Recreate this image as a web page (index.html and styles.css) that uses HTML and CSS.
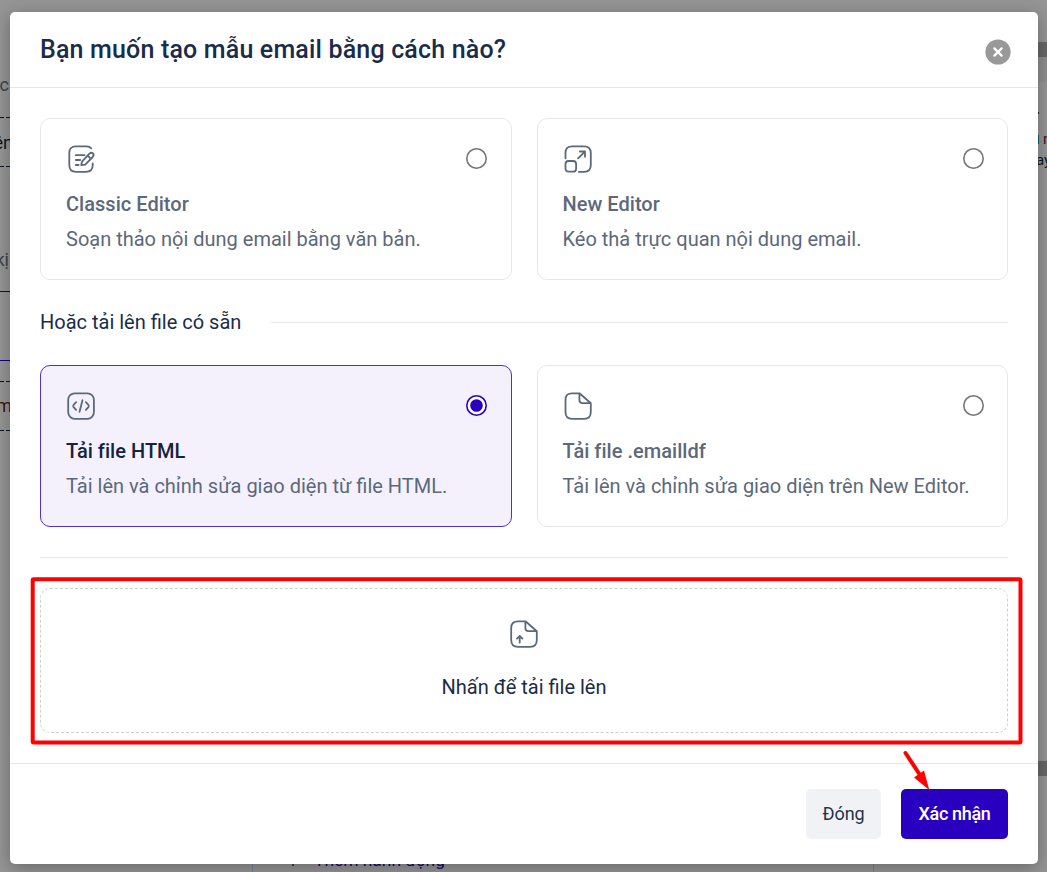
FILE: index.html
```html
<!DOCTYPE html>
<html lang="vi">
<head>
<meta charset="utf-8">
<title>Tạo mẫu email</title>
<link rel="stylesheet" href="styles.css">
</head>
<body>
<div class="screen">
  <svg class="backdrop" width="1047" height="872" viewBox="0 0 1047 872">
    <rect width="1047" height="872" fill="#959595"/>
    <g font-family="Roboto, sans-serif" font-size="18">
      <text x="9" y="91" text-anchor="end" fill="#3c434c">c</text>
      <text x="13" y="149" text-anchor="end" fill="#0c1524">ên</text>
      <text x="9" y="266" text-anchor="end" fill="#3c434c">kị</text>
      <text x="12" y="412" text-anchor="end" fill="#42140f">m</text>
      <text x="1043" y="144" font-size="15" fill="#42141c">m</text>
      <text x="1036" y="165" font-size="15" fill="#0c1524">ay</text>
      <text x="314" y="865.5" font-size="17.4" fill="#18007a">Thêm hành động</text>
    </g>
    <path d="M293 862V866" stroke="#222" stroke-width="1.5"/>
    <path d="M0 117.5H10M0 166.5H10M0 381.5H10M0 430.5H10" stroke="#0c1524" stroke-dasharray="4 2"/>
    <path d="M0 291.5H10M0 360.5H10" stroke="#18007a"/>
    <path d="M252.5 860V872M873.5 860V872" stroke="#7880a0"/>
    <path d="M1038 42H1047V57H1038ZM1038 761H1047V776H1038Z" fill="#686868"/>
    <path d="M1038 57H1047V82H1038Z" fill="#8f8f8f"/>
    <path d="M1038 135h1v9h-1z" fill="#126080"/>
    <path d="M1038 112h1v2h-1z" fill="#222"/>
  </svg>

  <section class="modal">
    <header class="modal-header">
      <h1 class="modal-title">Bạn muốn tạo mẫu email bằng cách nào?</h1>
      <svg class="close" width="26" height="26" viewBox="0 0 26 26">
        <circle cx="13" cy="13" r="12.6" fill="#999"/>
        <path d="M9.4 9.4l7.2 7.2M16.6 9.4l-7.2 7.2" stroke="#fff" stroke-width="2.3" stroke-linecap="round"/>
      </svg>
    </header>

    <div class="modal-body">
      <div class="cards">
        <div class="card">
          <div class="card-top">
            <svg class="icon" viewBox="0 0 30 30">
              <path d="M25.3 4.4C24.2 2.8 22.7 2.3 20.5 2.3H10Q3.3 2.3 3.3 9V21Q3.3 27.8 10 27.8H20Q26.7 27.8 26.7 21.3V19.4"/>
              <path d="M9.8 11.2H18.5M9.8 16H14.2M9.8 21H12.6"/>
              <path d="M15.2 21.2L16 17.6 23.4 9.6Q25.4 8 26.9 9.5T26.7 13L19.2 20.6ZM21.6 11.5L24.9 14.8"/>
            </svg>
            <svg class="radio" viewBox="0 0 21 21"><circle cx="10.5" cy="10.5" r="9.7"/></svg>
          </div>
          <h2 class="card-title">Classic Editor</h2>
          <p class="card-text">Soạn thảo nội dung email bằng văn bản.</p>
        </div>
        <div class="card">
          <div class="card-top">
            <svg class="icon" viewBox="0 0 30 30">
              <path d="M2.5 14.3V9Q2.5 2.3 9.2 2.3H21.2Q27.8 2.3 27.8 9V21Q27.8 27.8 21.2 27.8H15.8"/>
              <rect x="2.5" y="17" width="10.6" height="10.7" rx="3"/>
              <path d="M15 14.3L21.7 7.8M16.8 7.5H22V12.8"/>
            </svg>
            <svg class="radio" viewBox="0 0 21 21"><circle cx="10.5" cy="10.5" r="9.7"/></svg>
          </div>
          <h2 class="card-title">New Editor</h2>
          <p class="card-text">Kéo thả trực quan nội dung email.</p>
        </div>
      </div>

      <div class="separator"><span class="separator-text">Hoặc tải lên file có sẵn</span></div>

      <div class="cards">
        <div class="card card-selected">
          <div class="card-top">
            <svg class="icon" viewBox="0 0 30 30">
              <rect x="2.2" y="2.3" width="25.7" height="25.5" rx="6.5"/>
              <path d="M10.1 11.2L7.6 13.8Q6.8 15 7.6 16.1L10.1 18.8M19.9 11.2L22.4 13.8Q23.2 15 22.4 16.1L19.9 18.8M16.5 9.2L13.5 20.8"/>
            </svg>
            <svg class="radio radio-on" viewBox="0 0 21 21"><circle cx="10.5" cy="10.5" r="9.7"/><circle class="dot" cx="10.5" cy="10.5" r="6.3"/></svg>
          </div>
          <h2 class="card-title">Tải file HTML</h2>
          <p class="card-text">Tải lên và chỉnh sửa giao diện từ file HTML.</p>
        </div>
        <div class="card">
          <div class="card-top">
            <svg class="icon" viewBox="0 0 30 30">
              <path d="M16.5 2.3H9Q2.5 2.3 2.5 9V21Q2.5 27.8 9 27.8H21.2Q27.8 27.8 27.8 21V12.2ZM16.4 2.4V9Q16.4 12.2 19.6 12.2H27.6"/>
            </svg>
            <svg class="radio" viewBox="0 0 21 21"><circle cx="10.5" cy="10.5" r="9.7"/></svg>
          </div>
          <h2 class="card-title">Tải file .emailldf</h2>
          <p class="card-text">Tải lên và chỉnh sửa giao diện trên New Editor.</p>
        </div>
      </div>

      <div class="upload-section">
        <div class="dropzone">
          <svg class="icon" viewBox="0 0 30 30">
            <path d="M16.5 2.3H9Q2.2 2.3 2.2 9V21Q2.2 27.8 9 27.8H21.2Q27.8 27.8 27.8 21V12.2ZM16.4 2.4V9Q16.4 12.2 19.6 12.2H27.6"/>
            <path d="M10.7 23.5V17.4M8 19.6L10.7 17 13.4 19.6"/>
          </svg>
          <span class="dropzone-text">Nhấn để tải file lên</span>
        </div>
      </div>
    </div>

    <footer class="modal-footer">
      <button class="btn btn-light">Đóng</button>
      <button class="btn btn-primary">Xác nhận</button>
    </footer>
  </section>

  <svg class="annotation" width="1047" height="872" viewBox="0 0 1047 872">
    <rect x="32.7" y="579.3" width="987.8" height="163.2" rx="1" fill="none" stroke="#f00" stroke-width="4"/>
    <path d="M905.5 753L920 775" stroke="#f00" stroke-width="4" stroke-linecap="round"/>
    <path d="M929.3 790L914 777.5 924 770.5Z" fill="#f00"/>
  </svg>
</div>
</body>
</html>
```

FILE: styles.css
```css
* { box-sizing: border-box; }
body { margin: 0; font-family: Roboto, "Noto Sans", sans-serif; color: #1b2c48; }
h1, h2, p { margin: 0; }
.screen { position: relative; width: 1047px; height: 872px; overflow: hidden; padding: 12px 9px 8px 10px; }
.backdrop, .annotation { position: absolute; top: 0; left: 0; display: block; }
.annotation { pointer-events: none; }
.modal { position: relative; height: 852px; background: #fff; border-radius: 5px; box-shadow: 0 4px 18px rgba(0, 0, 0, .3); }
.modal-header { display: flex; align-items: center; justify-content: space-between; height: 76px; padding: 0 27px 0 30px; border-bottom: 1px solid #e7e7e7; }
.modal-title { font-size: 25px; font-weight: 500; line-height: 36px; letter-spacing: .17px; white-space: nowrap; }
.close { display: block; margin-top: 4px; }
.modal-body { padding: 30px; }
.cards { display: grid; grid-template-columns: 1fr 1fr; gap: 25px; }
.card { height: 162px; padding: 25px 23.5px 25px 25px; border: 1px solid #e7e7e7; border-radius: 10px; color: #5c687b; white-space: nowrap; }
.card-selected { background: #f4f1fd; border-color: #4c30d0; }
.card-top { display: flex; justify-content: space-between; margin-bottom: 15px; }
.icon { display: block; width: 30px; height: 30px; fill: none; stroke: #5c687b; stroke-width: 1.8; stroke-linecap: round; stroke-linejoin: round; }
.radio { display: block; width: 21px; height: 21px; margin-top: 4px; fill: #fff; stroke: #767676; stroke-width: 1.6; }
.radio-on { stroke: #2a00c0; }
.radio .dot { fill: #2a00c0; stroke: none; }
.card-title { margin-bottom: 5px; font-size: 20px; font-weight: 500; line-height: 30px; letter-spacing: .03px; }
.card-selected .card-title { color: #15233d; }
.card-text { font-size: 20px; line-height: 30px; }
.separator { display: flex; align-items: center; gap: 30px; height: 85px; }
.separator::after { content: ""; flex: 1; height: 1px; background: #e7e7e7; }
.separator-text { padding-bottom: 2px; font-size: 20px; }
.upload-section { margin-top: 30px; padding-top: 30px; border-top: 1px solid #e7e7e7; }
.dropzone { display: flex; flex-direction: column; align-items: center; gap: 23px; height: 145px; padding-top: 30px; border: 1px dashed #cfcfcf; border-radius: 10px; }
.dropzone-text { font-size: 20px; line-height: 30px; }
.modal-footer { display: flex; justify-content: flex-end; gap: 20px; padding: 25px 30px; border-top: 1px solid #e7e7e7; }
.btn { height: 50px; padding: 0; border: 0; border-radius: 5px; font: 400 18px/50px Roboto, sans-serif; letter-spacing: -.1px; }
.btn-light { width: 75px; background: #f1f2f5; color: #25334a; }
.btn-primary { width: 107px; background: #2a00c0; color: #fff; font-weight: 500; letter-spacing: -.35px; }
```
